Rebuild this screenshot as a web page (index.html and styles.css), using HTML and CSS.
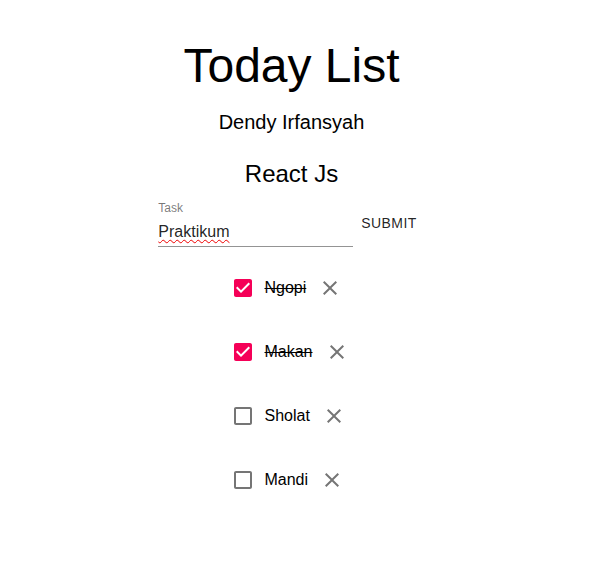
FILE: index.html
```html
<!DOCTYPE html>
<html>
<head>
<meta charset="utf-8">
<link rel="stylesheet" href="styles.css">
</head>
<body>
<div class="app">
  <h1 class="title">Today List</h1>
  <div class="author">Dendy Irfansyah</div>
  <h2 class="subtitle">React Js</h2>
  <form class="form">
    <div class="field">
      <label class="field-label">Task</label>
      <div class="field-input"><span class="spell">Praktikum</span></div>
    </div>
    <button type="button" class="submit">Submit</button>
  </form>
  <ul class="list">
    <li class="item done">
      <span class="check">
        <svg viewBox="0 0 24 24"><path d="M19 3H5c-1.11 0-2 .9-2 2v14c0 1.1.89 2 2 2h14c1.1 0 2-.9 2-2V5c0-1.1-.9-2-2-2zm-9 14l-5-5 1.41-1.41L10 14.17l7.59-7.59L19 8l-9 9z"/></svg>
      </span>
      <span class="text">Ngopi</span>
      <span class="close"><svg viewBox="0 0 24 24"><path d="M19 6.41L17.59 5 12 10.59 6.41 5 5 6.41 10.59 12 5 17.59 6.41 19 12 13.41 17.59 19 19 17.59 13.41 12z"/></svg></span>
    </li>
    <li class="item done">
      <span class="check">
        <svg viewBox="0 0 24 24"><path d="M19 3H5c-1.11 0-2 .9-2 2v14c0 1.1.89 2 2 2h14c1.1 0 2-.9 2-2V5c0-1.1-.9-2-2-2zm-9 14l-5-5 1.41-1.41L10 14.17l7.59-7.59L19 8l-9 9z"/></svg>
      </span>
      <span class="text">Makan</span>
      <span class="close"><svg viewBox="0 0 24 24"><path d="M19 6.41L17.59 5 12 10.59 6.41 5 5 6.41 10.59 12 5 17.59 6.41 19 12 13.41 17.59 19 19 17.59 13.41 12z"/></svg></span>
    </li>
    <li class="item">
      <span class="check">
        <svg viewBox="0 0 24 24"><path d="M19 5v14H5V5h14m0-2H5c-1.11 0-2 .9-2 2v14c0 1.1.89 2 2 2h14c1.1 0 2-.9 2-2V5c0-1.1-.9-2-2-2z"/></svg>
      </span>
      <span class="text">Sholat</span>
      <span class="close"><svg viewBox="0 0 24 24"><path d="M19 6.41L17.59 5 12 10.59 6.41 5 5 6.41 10.59 12 5 17.59 6.41 19 12 13.41 17.59 19 19 17.59 13.41 12z"/></svg></span>
    </li>
    <li class="item">
      <span class="check">
        <svg viewBox="0 0 24 24"><path d="M19 5v14H5V5h14m0-2H5c-1.11 0-2 .9-2 2v14c0 1.1.89 2 2 2h14c1.1 0 2-.9 2-2V5c0-1.1-.9-2-2-2z"/></svg>
      </span>
      <span class="text">Mandi</span>
      <span class="close"><svg viewBox="0 0 24 24"><path d="M19 6.41L17.59 5 12 10.59 6.41 5 5 6.41 10.59 12 5 17.59 6.41 19 12 13.41 17.59 19 19 17.59 13.41 12z"/></svg></span>
    </li>
  </ul>
</div>
</body>
</html>
```
FILE: styles.css
```css
html, body {
  margin: 0;
  padding: 0;
  background: #fff;
}
body {
  font-family: "Liberation Sans", Arial, sans-serif;
  color: #000;
}
.app {
  display: flex;
  flex-direction: column;
  align-items: center;
  padding-right: 10px;
}
.title {
  font-size: 48px;
  font-weight: 400;
  line-height: normal;
  margin: 38px 0 0;
}
.author {
  font-size: 20px;
  line-height: normal;
  margin-top: 18px;
}
.subtitle {
  font-size: 24px;
  font-weight: 400;
  line-height: normal;
  margin: 26px 0 0;
}
.form {
  display: flex;
  align-items: center;
  margin: 11px 0 0;
}
.field {
  width: 195px;
  height: 48px;
  border-bottom: 1px solid rgba(0, 0, 0, 0.42);
  box-sizing: border-box;
}
.field-label {
  display: block;
  font-size: 12px;
  line-height: 1;
  color: rgba(0, 0, 0, 0.54);
  margin-top: 3px;
}
.field-input {
  font-size: 16px;
  line-height: 19px;
  padding: 6px 0 6px;
  margin-top: 2px;
  color: rgba(0, 0, 0, 0.87);
}
.spell {
  text-decoration: underline wavy #e00;
  text-decoration-thickness: 1px;
  text-underline-offset: 2px;
}
.submit {
  font-family: "Liberation Sans", Arial, sans-serif;
  font-size: 14px;
  font-weight: 500;
  line-height: 1.75;
  letter-spacing: 0.02857em;
  text-transform: uppercase;
  color: rgba(0, 0, 0, 0.87);
  background: none;
  border: 0;
  padding: 6px 8px;
  margin: 0;
  min-width: 64px;
}
.list {
  list-style: none;
  margin: 17px 0 0;
  padding: 0;
  display: flex;
  flex-direction: column;
  gap: 16px;
}
.item {
  display: flex;
  align-items: center;
  height: 48px;
}
.check {
  display: flex;
  padding: 9px;
}
.check svg {
  width: 24px;
  height: 24px;
  fill: rgba(0, 0, 0, 0.54);
}
.done .check svg {
  fill: #f50057;
}
.text {
  font-size: 16px;
  line-height: 1.5;
}
.done .text {
  text-decoration: line-through;
}
.close {
  display: flex;
  padding: 12px;
}
.close svg {
  width: 24px;
  height: 24px;
  fill: rgba(0, 0, 0, 0.54);
}
```
